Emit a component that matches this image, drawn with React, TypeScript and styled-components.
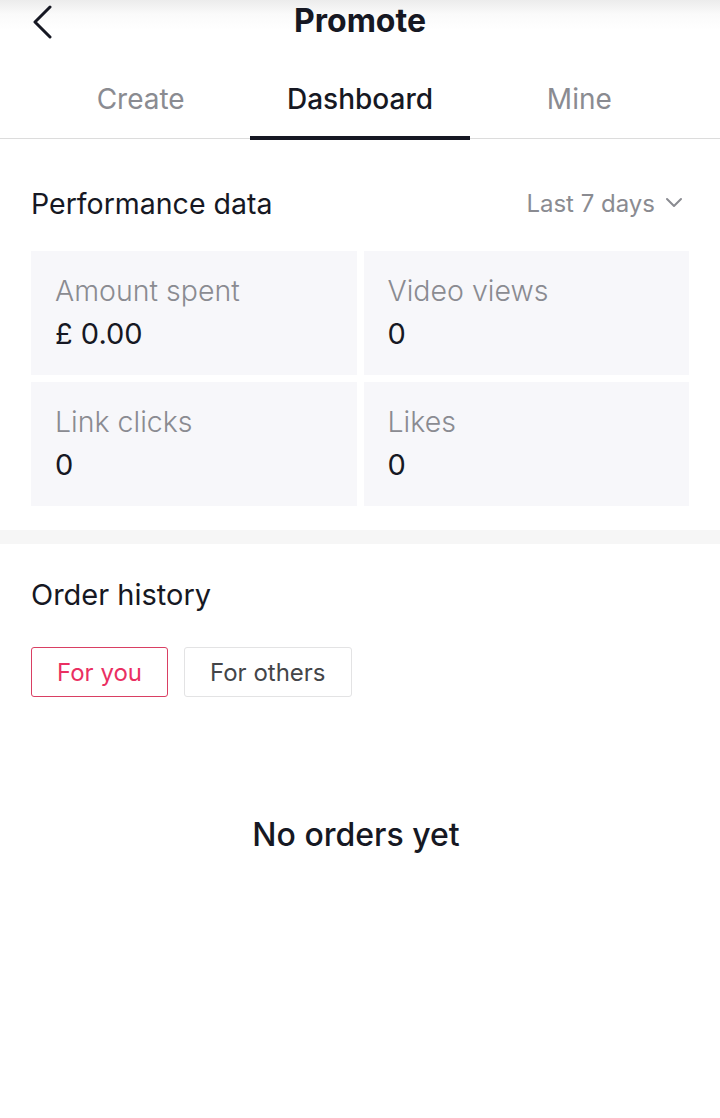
import React from "react";
import styled, { createGlobalStyle } from "styled-components";

const Global = createGlobalStyle`
  html, body { margin: 0; padding: 0; background: #fff; }
  body { font-family: Inter, Roboto, "Noto Sans", "Liberation Sans", sans-serif; color: #161823; }
  * { box-sizing: border-box; }
`;

const Page = styled.div`
  width: 720px;
  min-height: 1118px;
  background: #fff;
  display: flex;
  flex-direction: column;
`;

const TopBar = styled.div`
  height: 42px;
  display: grid;
  grid-template-columns: 90px 1fr 90px;
  align-items: center;
  background: linear-gradient(#ececec 0px, #fafafa 14px, #fff 30px);
`;

const BackBtn = styled.div`
  padding-left: 30px;
  display: flex;
  align-items: center;
  padding-top: 2px;
`;

const Title = styled.h1`
  margin: 0;
  text-align: center;
  font-size: 32px;
  font-weight: 700;
  color: #161823;
  line-height: 40px;
`;

const Tabs = styled.div`
  display: grid;
  grid-template-columns: repeat(3, 1fr);
  padding: 0 31px;
  border-bottom: 1.5px solid #dcdcdc;
  margin-top: 18px;
`;

const Tab = styled.div<{ $active?: boolean }>`
  position: relative;
  text-align: center;
  font-size: 28px;
  font-weight: ${(p) => (p.$active ? 500 : 400)};
  color: ${(p) => (p.$active ? "#161823" : "#8a8b91")};
  height: 78px;
  line-height: 78px;
  &::after {
    content: "";
    display: ${(p) => (p.$active ? "block" : "none")};
    position: absolute;
    left: 0;
    right: 0;
    bottom: -2px;
    height: 4px;
    background: #161823;
  }
`;

const Section = styled.div`
  padding: 0 31px;
`;

const SectionHead = styled.div`
  display: flex;
  justify-content: space-between;
  align-items: center;
  height: 62px;
  margin-top: 33px;
  margin-bottom: 17px;
`;

const SectionTitle = styled.div`
  font-size: 28.5px;
  font-weight: 400;
  color: #161823;
`;

const RangePicker = styled.div`
  display: flex;
  align-items: center;
  gap: 10px;
  font-size: 24px;
  color: #8a8b91;
  padding-right: 6px;
`;

const Grid = styled.div`
  display: grid;
  grid-template-columns: 1fr 1fr;
  gap: 7px;
`;

const Cell = styled.div`
  background: #f7f7fa;
  height: 124px;
  padding: 24px 24px 0;
  display: flex;
  flex-direction: column;
  gap: 9px;
`;

const CellLabel = styled.div`
  font-size: 28.5px;
  font-weight: 300;
  color: #8a8b91;
  line-height: 32px;
`;

const CellValue = styled.div`
  font-size: 29px;
  font-weight: 400;
  color: #161823;
  line-height: 36px;
`;

const Divider = styled.div`
  height: 14px;
  background: #f6f6f6;
  margin-top: 24px;
`;

const OrderTitle = styled(SectionTitle)`
  margin-top: 31px;
  line-height: 40px;
  font-size: 29px;
`;

const FilterRow = styled.div`
  display: flex;
  gap: 16px;
  margin-top: 32px;
`;

const Filter = styled.div<{ $active?: boolean }>`
  height: 50px;
  padding: 0 25px;
  display: flex;
  align-items: center;
  font-size: 24px;
  border-radius: 3px;
  border: 1.5px solid ${(p) => (p.$active ? "#d93f63" : "#e3e3e4")};
  color: ${(p) => (p.$active ? "#ea2f62" : "#444548")};
`;

const Empty = styled.div`
  margin-top: 118px;
  padding-right: 8px;
  text-align: center;
  font-size: 32px;
  font-weight: 500;
  color: #161823;
`;

export default function App() {
  const stats = [
    { label: "Amount spent", value: "£ 0.00" },
    { label: "Video views", value: "0" },
    { label: "Link clicks", value: "0" },
    { label: "Likes", value: "0" },
  ];
  return (
    <Page>
      <Global />
      <TopBar>
        <BackBtn>
          <svg width="26" height="34" viewBox="0 0 26 34" fill="none">
            <path d="M20 2 L5 17 L20 32" stroke="#161823" strokeWidth="3" strokeLinecap="round" strokeLinejoin="round" />
          </svg>
        </BackBtn>
        <Title>Promote</Title>
        <div />
      </TopBar>
      <Tabs>
        <Tab>Create</Tab>
        <Tab $active>Dashboard</Tab>
        <Tab>Mine</Tab>
      </Tabs>
      <Section>
        <SectionHead>
          <SectionTitle>Performance data</SectionTitle>
          <RangePicker>
            Last 7 days
            <svg width="18" height="12" viewBox="0 0 18 12" fill="none">
              <path d="M2 2 L9 9 L16 2" stroke="#8a8b91" strokeWidth="2" strokeLinecap="round" strokeLinejoin="round" />
            </svg>
          </RangePicker>
        </SectionHead>
        <Grid>
          {stats.map((s) => (
            <Cell key={s.label}>
              <CellLabel>{s.label}</CellLabel>
              <CellValue>{s.value}</CellValue>
            </Cell>
          ))}
        </Grid>
      </Section>
      <Divider />
      <Section>
        <OrderTitle>Order history</OrderTitle>
        <FilterRow>
          <Filter $active>For you</Filter>
          <Filter>For others</Filter>
        </FilterRow>
        <Empty>No orders yet</Empty>
      </Section>
    </Page>
  );
}
